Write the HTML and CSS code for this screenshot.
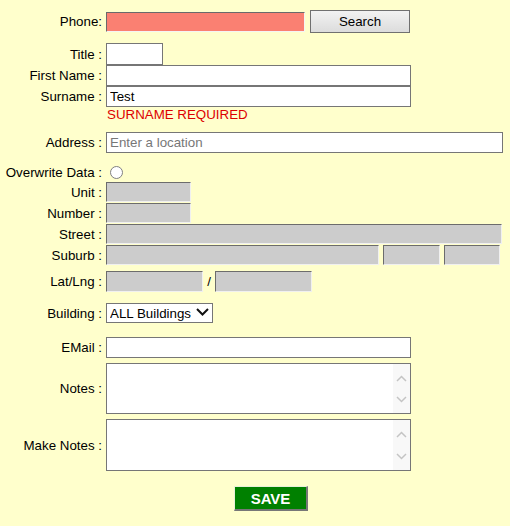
FILE: index.html
```html
<!DOCTYPE html>
<html>
<head>
<meta charset="utf-8">
<link rel="stylesheet" href="styles.css">
</head>
<body>
<form class="form">
  <div class="row r-phone">
    <label class="lbl">Phone:</label>
    <div class="ctl">
      <input class="inp phone" type="text">
      <button type="button" class="search">Search</button>
    </div>
  </div>

  <div class="row r-title">
    <label class="lbl">Title :</label>
    <input class="inp title" type="text">
  </div>
  <div class="row r-name">
    <label class="lbl">First Name :</label>
    <input class="inp wide" type="text">
  </div>
  <div class="row r-name">
    <label class="lbl">Surname :</label>
    <input class="inp wide" type="text" value="Test">
  </div>
  <div class="row r-err">
    <span class="lbl"></span>
    <span class="err">SURNAME REQUIRED</span>
  </div>

  <div class="row r-addr">
    <label class="lbl">Address :</label>
    <input class="inp addr" type="text" placeholder="Enter a location">
  </div>

  <div class="row r-radio">
    <label class="lbl">Overwrite Data :</label>
    <input class="radio" type="radio">
  </div>
  <div class="row r-grey first">
    <label class="lbl">Unit :</label>
    <input class="ginp short" type="text">
  </div>
  <div class="row r-grey">
    <label class="lbl">Number :</label>
    <input class="ginp short" type="text">
  </div>
  <div class="row r-grey">
    <label class="lbl">Street :</label>
    <input class="ginp street" type="text">
  </div>
  <div class="row r-grey">
    <label class="lbl">Suburb :</label>
    <div class="ctl suburb">
      <input class="ginp sub1" type="text">
      <input class="ginp sub2" type="text">
      <input class="ginp sub3" type="text">
    </div>
  </div>

  <div class="row r-latlng">
    <label class="lbl">Lat/Lng :</label>
    <div class="ctl">
      <input class="ginp ll" type="text">
      <span class="slash">/</span>
      <input class="ginp ll" type="text">
    </div>
  </div>

  <div class="row r-build">
    <label class="lbl">Building :</label>
    <div class="selwrap">
      <select class="sel"><option>ALL Buildings</option></select>
      <svg class="selarrow" width="13" height="8" viewBox="0 0 13 8"><path d="M1 1 L6.5 6.5 L12 1" fill="none" stroke="#111" stroke-width="2"/></svg>
    </div>
  </div>

  <div class="row r-email">
    <label class="lbl">EMail :</label>
    <input class="inp wide" type="text">
  </div>

  <div class="row r-notes">
    <label class="lbl">Notes :</label>
    <div class="area">
      <textarea class="ta"></textarea>
      <div class="sb">
        <svg width="11" height="7" viewBox="0 0 11 7"><path d="M1 6 L5.5 1.5 L10 6" fill="none" stroke="#c4c4c4" stroke-width="1.5"/></svg>
        <svg width="11" height="7" viewBox="0 0 11 7"><path d="M1 1 L5.5 5.5 L10 1" fill="none" stroke="#c4c4c4" stroke-width="1.5"/></svg>
      </div>
    </div>
  </div>
  <div class="row r-mnotes">
    <label class="lbl">Make Notes :</label>
    <div class="area tall">
      <textarea class="ta"></textarea>
      <div class="sb">
        <svg width="11" height="7" viewBox="0 0 11 7"><path d="M1 6 L5.5 1.5 L10 6" fill="none" stroke="#c4c4c4" stroke-width="1.5"/></svg>
        <svg width="11" height="7" viewBox="0 0 11 7"><path d="M1 1 L5.5 5.5 L10 1" fill="none" stroke="#c4c4c4" stroke-width="1.5"/></svg>
      </div>
    </div>
  </div>

  <div class="r-save">
    <button type="button" class="save">SAVE</button>
  </div>
</form>
</body>
</html>
```

FILE: styles.css
```css
* { box-sizing: border-box; }

body {
  margin: 0;
  background: #ffffcc;
  font: 13.33px "Liberation Sans", Arial, sans-serif;
  color: #000;
}

.form {
  display: flex;
  flex-direction: column;
  padding-top: 10px;
}

.row {
  display: flex;
  align-items: center;
  gap: 4px;
}

.lbl {
  width: 102px;
  flex: none;
  text-align: right;
  white-space: nowrap;
}

.ctl {
  display: flex;
  align-items: center;
}

input, select, textarea, button {
  font: inherit;
  color: #000;
  margin: 0;
}

.inp {
  height: 21px;
  border: 1px solid #767676;
  background: #fff;
  padding: 0 3px;
  outline: none;
}

.phone {
  width: 199px;
  height: 20px;
  background: #fa8072;
  border-color: #6a6a6a #f4f4f4 #f4f4f4 #6a6a6a;
}

.search {
  width: 100px;
  height: 23px;
  margin-left: 5px;
  border: 1px solid #707070;
  background: linear-gradient(#f2f2f2, #dcdcdc);
  padding: 0;
}

.r-title { margin-top: 10px; }
.title { width: 57px; height: 22px; }
.wide { width: 305px; }

.r-err { height: 15px; }
.err {
  color: #dd0000;
  line-height: 15px;
  padding-left: 1px;
}

.r-addr { margin-top: 10px; }
.addr { width: 397px; }
.addr::placeholder { color: #777; }

.r-radio { margin-top: 10px; height: 18px; }
.radio {
  appearance: none;
  width: 13px;
  height: 13px;
  margin: 0 0 0 4px;
  border: 1px solid #808080;
  border-radius: 50%;
  background: #fff;
}

.r-grey { margin-top: 1px; }

.ginp {
  height: 20px;
  background: #cccccc;
  border: 1px solid;
  border-color: #6c6c6c #f0f0f0 #f0f0f0 #6c6c6c;
  padding: 0 3px;
  outline: none;
}
.short { width: 85px; }
.street { width: 396px; }
.suburb { gap: 4px; }
.sub1 { width: 273px; }
.sub2 { width: 57px; }
.sub3 { width: 56px; }

.r-latlng { margin-top: 6px; }
.ll { width: 97px; height: 21px; }
.slash {
  width: 12px;
  text-align: center;
}

.r-build { margin-top: 11px; }
.selwrap {
  position: relative;
  width: 107px;
  height: 20px;
}
.sel {
  appearance: none;
  width: 107px;
  height: 20px;
  border: 1px solid #767676;
  background: #fff;
  padding: 0 0 0 3px;
  border-radius: 0;
  outline: none;
}
.selarrow {
  position: absolute;
  left: 90px;
  top: 5px;
  pointer-events: none;
}

.r-email { margin-top: 14px; }

.r-notes { margin-top: 5px; }
.r-mnotes { margin-top: 5px; }

.area {
  width: 305px;
  height: 51px;
  border: 1px solid #767676;
  background: #fff;
  display: flex;
}
.area.tall { height: 52px; }
.ta {
  flex: 1;
  border: 0;
  resize: none;
  outline: none;
  background: #fff;
}
.sb {
  width: 17px;
  background: #f8f8f8;
  display: flex;
  flex-direction: column;
  justify-content: space-between;
  align-items: center;
  padding: 11px 0 10px;
}

.r-save {
  margin-top: 15px;
  padding-left: 234px;
}
.save {
  width: 74px;
  height: 25px;
  background: #008000;
  color: #fff;
  font-weight: bold;
  font-size: 15px;
  border: 0;
  border-top: 1px solid #e8f0d8;
  border-left: 1px solid #e8f0d8;
  border-right: 2px solid #777;
  border-bottom: 2px solid #777;
  padding: 0;
}
```
